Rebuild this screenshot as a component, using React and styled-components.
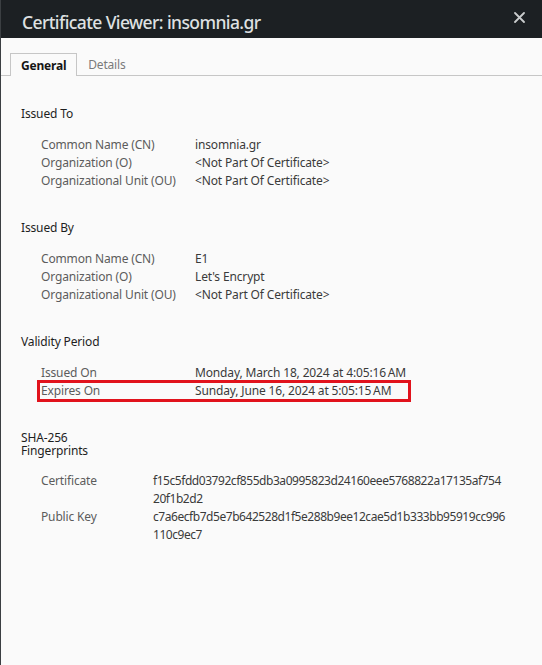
import React from 'react'
import styled, { createGlobalStyle } from 'styled-components'

const GlobalStyle = createGlobalStyle`
  html, body {
    margin: 0;
    padding: 0;
    background: #fafafa;
  }
  body {
    font-family: "Noto Sans", "Open Sans", sans-serif;
  }
`

const Window = styled.div`
  height: 665px;
  box-sizing: border-box;
  border-left: 1px solid #3b3f42;
  background: #fafafa;
  overflow: hidden;
`

const TitleBar = styled.div`
  height: 38px;
  background: #1c2023;
  display: flex;
  align-items: center;
  justify-content: space-between;
  padding: 0 17px 0 21px;
  box-sizing: border-box;
`

const Title = styled.h1`
  margin: 5px 0 0;
  font-size: 17.5px;
  font-weight: 500;
  color: #dfe1e2;
  letter-spacing: -0.6px;
`

const Close = styled.svg`
  width: 11px;
  height: 11px;
  margin-top: -3px;
`

const TabBar = styled.div`
  margin-top: 15px;
  display: flex;
  align-items: flex-end;
  padding-left: 9px;
  border-bottom: 1px solid #c6c6c6;
  height: 22px;
`

const Tab = styled.div`
  height: ${p => (p.$active ? '23px' : '22px')};
  box-sizing: border-box;
  margin-bottom: ${p => (p.$active ? '-1px' : '0')};
  padding: 0 10px;
  display: flex;
  align-items: center;
  font-size: 12px;
  letter-spacing: -0.2px;
  font-weight: ${p => (p.$active ? 700 : 400)};
  color: ${p => (p.$active ? '#151515' : '#7a7a7a')};
  background: ${p => (p.$active ? '#fafafa' : 'transparent')};
  border: 1px solid ${p => (p.$active ? '#c6c6c6' : 'transparent')};
  border-bottom: none;
`

const Body = styled.div`
  padding: 31px 0 0 20px;
  font-size: 12px;
  letter-spacing: -0.15px;
`

const Section = styled.section`
  margin-bottom: 31px;
`

const Heading = styled.h2`
  margin: 0 0 ${p => p.$gap || 16}px;
  font-size: 12px;
  font-weight: 400;
  line-height: 13px;
  color: #1e1e1e;
`

const Rows = styled.div`
  padding-left: 20px;
`

const Row = styled.div`
  display: grid;
  grid-template-columns: ${p => p.$labelWidth || 154}px auto;
  justify-content: start;
  line-height: 18px;
  ${p =>
    p.$marked &&
    `
    margin-left: -2px;
    padding-left: 2px;
    width: 368px;
    outline: 3px solid #e1121c;
    outline-offset: -1px;
  `}
`

const Label = styled.div`
  color: #5c5c5c;
`

const Value = styled.div`
  color: #3a3a3a;
`

const Hex = styled.div`
  letter-spacing: -0.45px;
`

const sections = [
  {
    title: 'Issued To',
    rows: [
      ['Common Name (CN)', 'insomnia.gr'],
      ['Organization (O)', '<Not Part Of Certificate>'],
      ['Organizational Unit (OU)', '<Not Part Of Certificate>'],
    ],
  },
  {
    title: 'Issued By',
    rows: [
      ['Common Name (CN)', 'E1'],
      ['Organization (O)', "Let's Encrypt"],
      ['Organizational Unit (OU)', '<Not Part Of Certificate>'],
    ],
  },
  {
    title: 'Validity Period',
    rows: [
      ['Issued On', 'Monday, March 18, 2024 at 4:05:16\u202FAM'],
      ['Expires On', 'Sunday, June 16, 2024 at 5:05:15\u202FAM', true],
    ],
  },
]

const fingerprints = [
  ['Certificate', ['f15c5fdd03792cf855db3a0995823d24160eee5768822a17135af754', '20f1b2d2']],
  ['Public Key', ['c7a6ecfb7d5e7b642528d1f5e288b9ee12cae5d1b333bb95919cc996', '110c9ec7']],
]

const App = () => {
  return (
    <Window>
      <GlobalStyle />
      <TitleBar>
        <Title>Certificate Viewer: insomnia.gr</Title>
        <Close viewBox="0 0 11 11">
          <path d="M1 1 L10 10 M10 1 L1 10" stroke="#c9cccd" strokeWidth="1.8" strokeLinecap="round" />
        </Close>
      </TitleBar>
      <TabBar>
        <Tab $active>General</Tab>
        <Tab>Details</Tab>
      </TabBar>
      <Body>
        {sections.map(s => (
          <Section key={s.title}>
            <Heading>{s.title}</Heading>
            <Rows>
              {s.rows.map(([label, value, marked]) => (
                <Row key={label} $marked={marked}>
                  <Label>{label}</Label>
                  <Value>{value}</Value>
                </Row>
              ))}
            </Rows>
          </Section>
        ))}
        <Section>
          <Heading $gap={15}>
            SHA-256
            <br />
            Fingerprints
          </Heading>
          <Rows>
            {fingerprints.map(([label, lines]) => (
              <Row key={label} $labelWidth={112}>
                <Label>{label}</Label>
                <Value>
                  {lines.map(l => (
                    <Hex key={l}>{l}</Hex>
                  ))}
                </Value>
              </Row>
            ))}
          </Rows>
        </Section>
      </Body>
    </Window>
  )
}

export default App
